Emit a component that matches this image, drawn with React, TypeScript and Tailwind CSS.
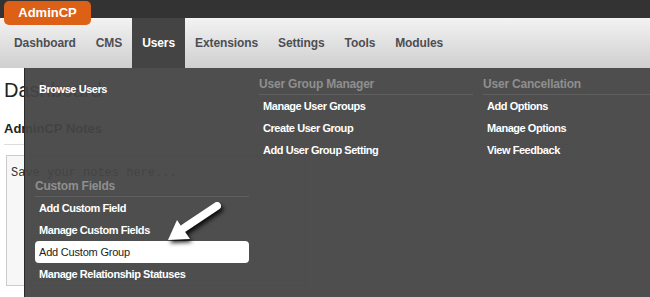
const navItems = ["Dashboard", "CMS", "Users", "Extensions", "Settings", "Tools", "Modules"];

const groups = [
  { title: "User Group Manager", items: ["Manage User Groups", "Create User Group", "Add User Group Setting"] },
  { title: "User Cancellation", items: ["Add Options", "Manage Options", "View Feedback"] },
];

const customFields = ["Add Custom Field", "Manage Custom Fields", "Add Custom Group", "Manage Relationship Statuses"];

function Header({ title }: { title: string }) {
  return (
    <div className="h-[21px] flex items-center border-b border-[#5f5f5f] text-[12px] font-bold tracking-[-0.2px] text-[#8f8f8f]">
      {title}
    </div>
  );
}

function Item({ label, active }: { label: string; active?: boolean }) {
  return (
    <div
      className={
        active
          ? "h-[22px] leading-[23px] pl-[4px] rounded-[4px] bg-white text-[11px] tracking-[-0.2px] text-[#222]"
          : "h-[22px] leading-[23px] pl-[4px] text-[11px] font-bold tracking-[-0.45px] text-white"
      }
    >
      {label}
    </div>
  );
}

export default function App() {
  return (
    <div className="relative w-[650px] h-[297px] overflow-hidden bg-white font-['Liberation_Sans',Arial,sans-serif]">
      {/* top bar */}
      <div className="h-[18px] bg-[#333333]" />
      <div className="absolute left-[4px] top-[1px] z-10 h-[24px] w-[87px] rounded-[5px] bg-[#dc6117] flex items-center justify-center text-[13px] font-bold text-white">
        AdminCP
      </div>

      {/* nav */}
      <nav className="h-[50px] flex pl-[4px] bg-gradient-to-b from-[#f3f3f3] to-[#cfcfcf]">
        {navItems.map((n) => (
          <div
            key={n}
            className={
              n === "Users"
                ? "px-[10px] flex items-center bg-[#444444] text-[12px] font-bold tracking-[-0.1px] text-white"
                : "px-[10px] flex items-center text-[12px] font-bold tracking-[-0.1px] text-[#4e4e52]"
            }
          >
            {n}
          </div>
        ))}
      </nav>

      {/* page beneath */}
      <div className="px-[4px] text-[#222]">
        <h1 className="mt-[10px] text-[20px] leading-[24px]">Dashboard</h1>
        <h2 className="mt-[17px] text-[13px] font-bold leading-[20px] pb-[5px] border-b border-[#dddddd]">AdminCP Notes</h2>
        <div className="mt-[10px] ml-[2px] w-[300px] h-[131px] border border-[#cccccc] bg-[#f7f7f7] px-[4px] py-[8px] font-['Liberation_Mono',monospace] text-[12px] text-[#333]">
          Save your notes here...
        </div>
      </div>

      {/* dropdown */}
      <div className="absolute left-[24px] top-[68px] right-0 bottom-0 bg-[#444444]/95 border-l border-[#2a2a2a] flex gap-[10px] pl-[10px]">
        <div className="w-[214px] shrink-0 flex flex-col pt-[10px]">
          <Item label="Browse Users" />
          <div className="mt-[76px]">
            <Header title="Custom Fields" />
            {customFields.map((c) => (
              <Item key={c} label={c} active={c === "Add Custom Group"} />
            ))}
          </div>
        </div>
        {groups.map((g) => (
          <div key={g.title} className="w-[214px] shrink-0 flex flex-col pt-[6px]">
            <Header title={g.title} />
            {g.items.map((i) => (
              <Item key={i} label={i} />
            ))}
          </div>
        ))}
      </div>

      {/* pointer arrow */}
      <svg
        className="absolute left-0 top-0 pointer-events-none drop-shadow-[2px_3px_2px_rgba(0,0,0,0.85)]"
        width="650"
        height="297"
      >
        <line x1="217" y1="206" x2="184" y2="228" stroke="white" strokeWidth="8" strokeLinecap="round" />
        <polygon points="168,240 190,239 177,220" fill="white" />
      </svg>
    </div>
  );
}
